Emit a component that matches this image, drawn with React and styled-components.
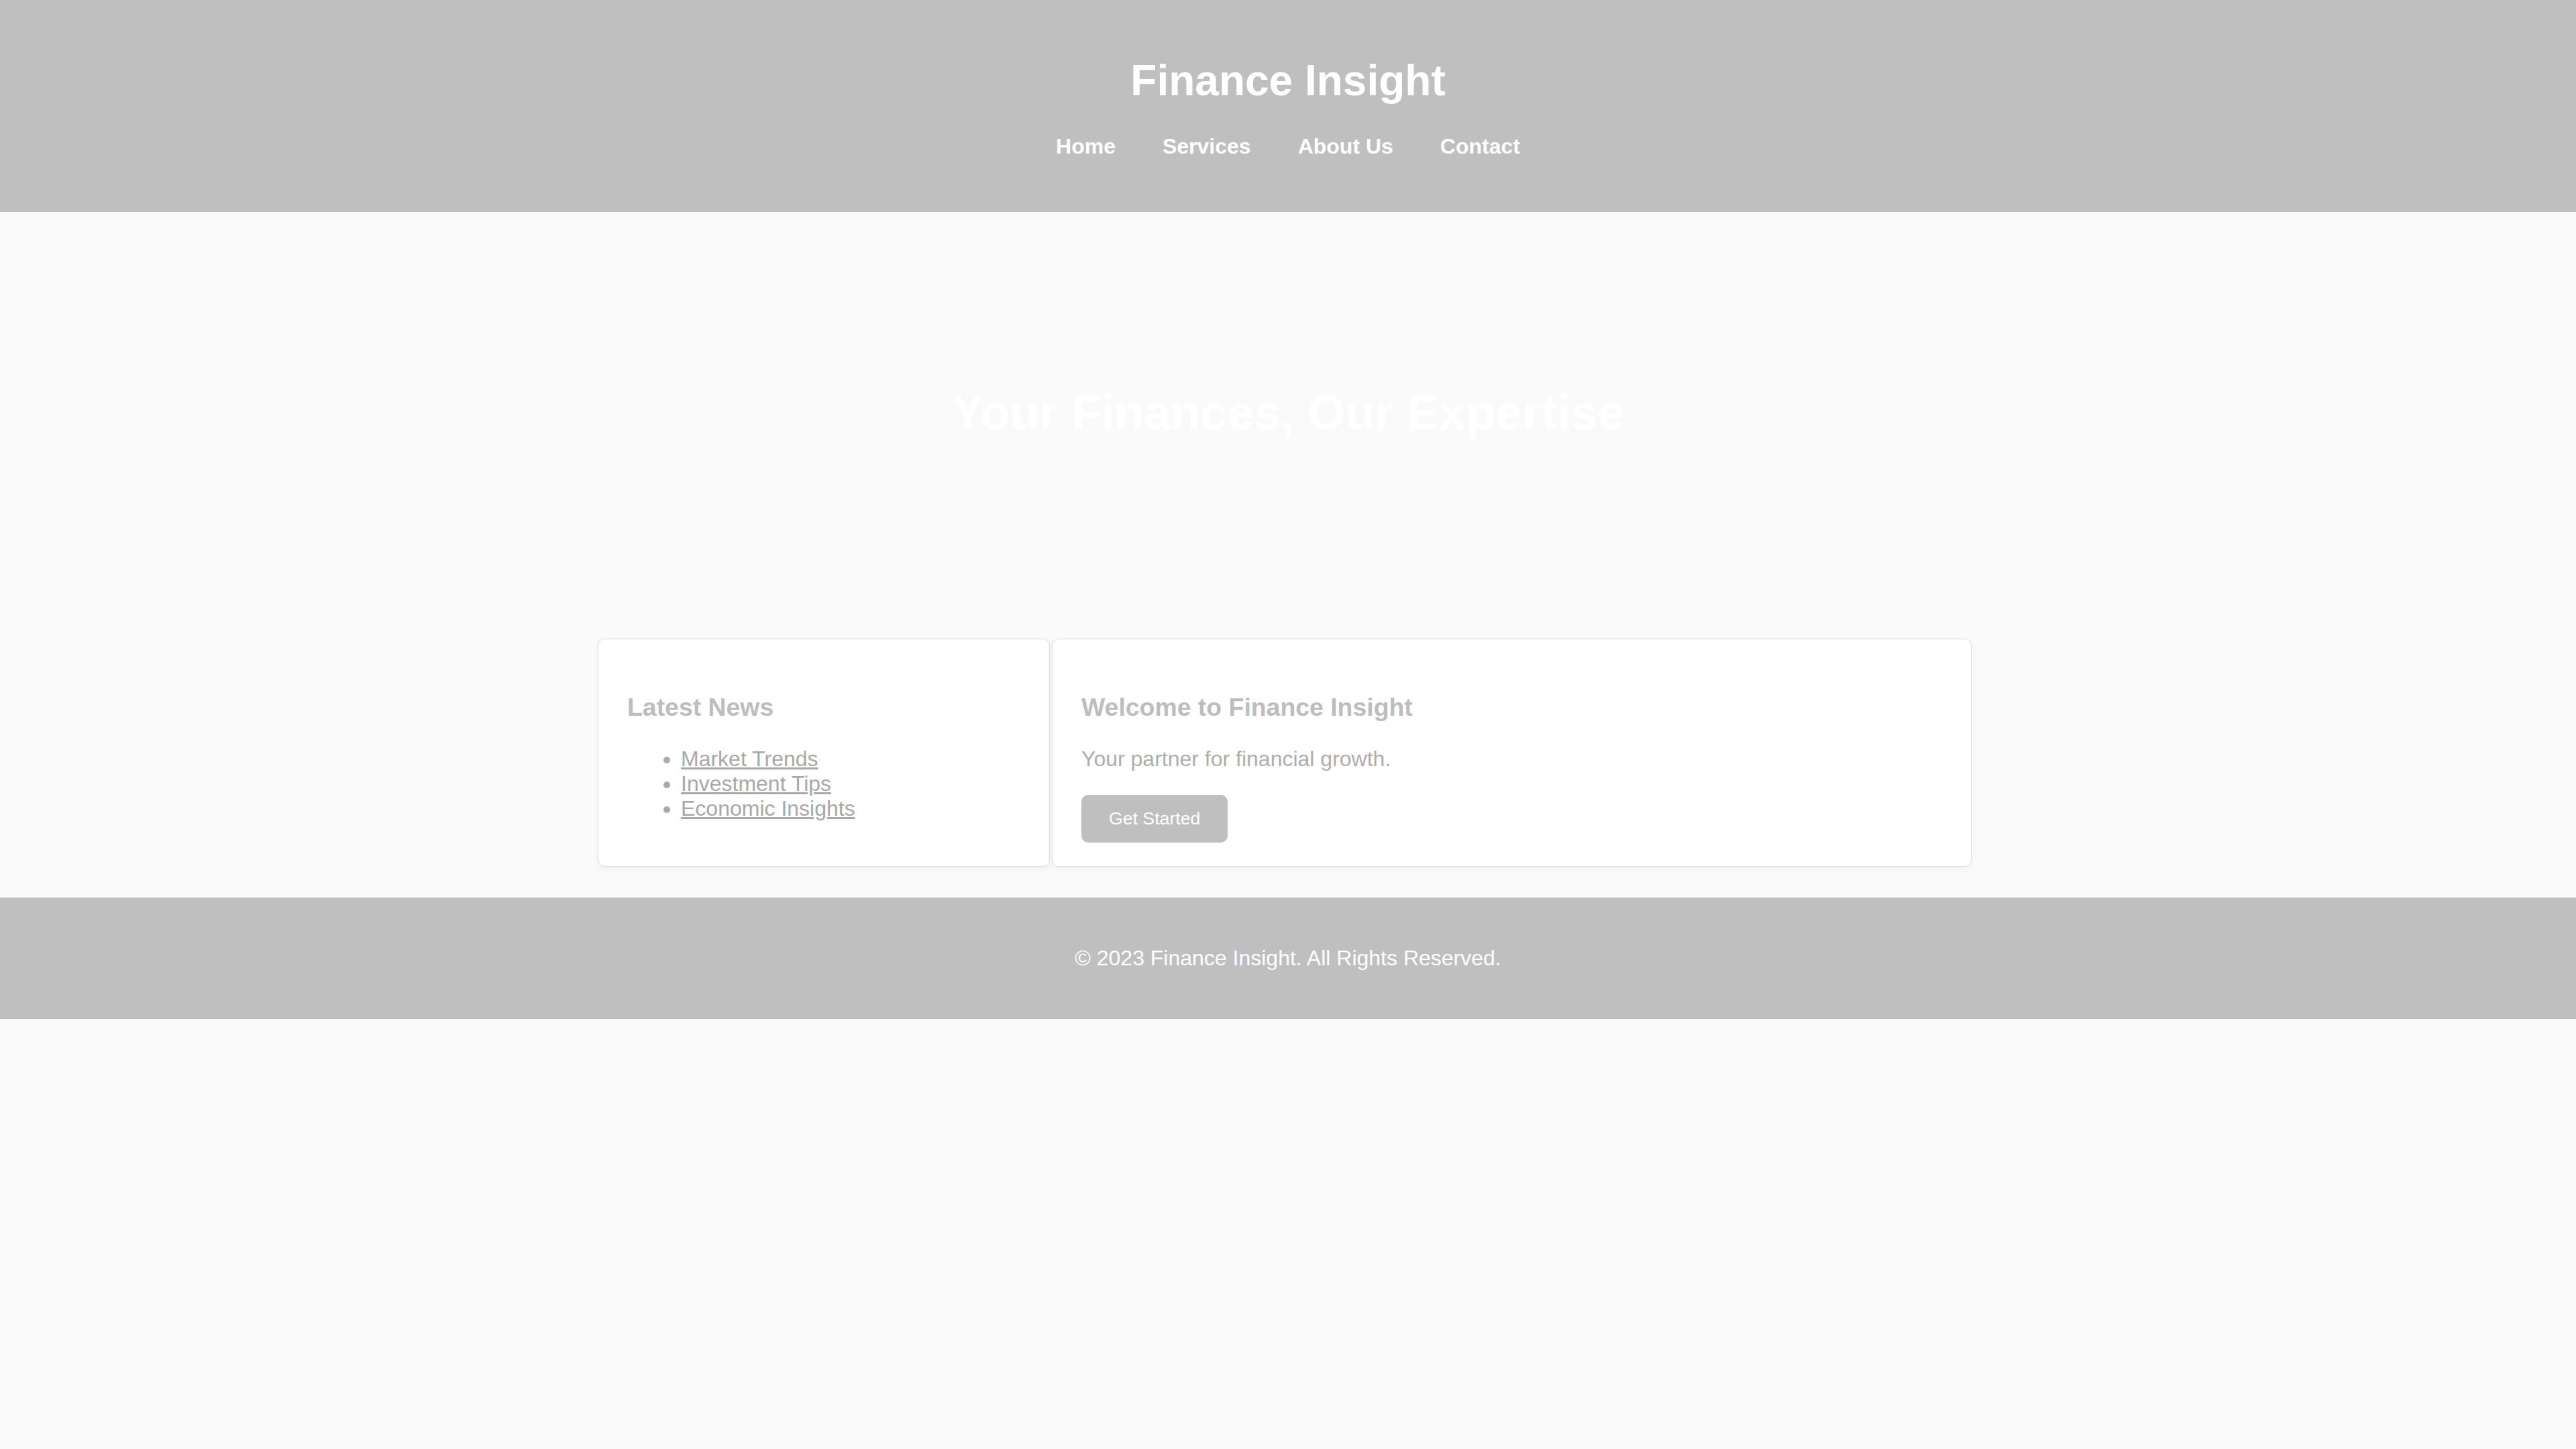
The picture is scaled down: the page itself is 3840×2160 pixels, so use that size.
import React from "react";
import styled, { createGlobalStyle } from "styled-components";

const GlobalStyle = createGlobalStyle`
    body {
        margin: 0;
        background: #fafafa;
        font-family: "Liberation Sans", Arial, sans-serif;
        font-size: 32px;
    }
`;

const Header = styled.header`
    background: #bfbfbf;
    color: #ffffff;
    text-align: center;
    padding: 40px 0 79px;
`;

const SiteTitle = styled.h1`
    font-size: 64px;
    margin: 43px 0;
    line-height: 74px;
`;

const Nav = styled.nav`
    display: flex;
    justify-content: center;
    gap: 70px;
`;

const NavLink = styled.a`
    color: #ffffff;
    font-weight: bold;
    text-decoration: none;
    line-height: 37px;
`;

const Hero = styled.section`
    height: 598px;
    display: flex;
    align-items: center;
    justify-content: center;
`;

const HeroTitle = styled.h2`
    color: #ffffff;
    font-size: 72px;
    margin: 0;
`;

const Main = styled.main`
    padding: 38px 10px 46px 0;
`;

const Columns = styled.div`
    display: grid;
    grid-template-columns: 674fr 1371fr;
    gap: 3px;
    max-width: 2048px;
    margin: 0 auto;
`;

const Card = styled.div`
    background: #ffffff;
    border: 1px solid #dcdcdc;
    border-radius: 10px;
    box-shadow: 0 4px 12px rgba(0, 0, 0, 0.04);
    padding: 43px 43px 35px;
`;

const CardTitle = styled.h3`
    color: #bdbdbd;
    font-size: 37.4px;
    line-height: 43px;
    margin: 37px 0;
`;

const NewsList = styled.ul`
    margin: 32px 0;
    padding-left: 80px;
    color: #aaaaaa;
    line-height: 37px;
`;

const NewsLink = styled.a`
    color: #a8a8a8;
    text-decoration: underline;
`;

const Lead = styled.p`
    color: #aeaeae;
    margin: 32px 0 35px;
    line-height: 37px;
`;

const Button = styled.button`
    background: #bfbfbf;
    color: #ffffff;
    border: none;
    border-radius: 10px;
    font-family: "Liberation Sans", Arial, sans-serif;
    font-size: 26.67px;
    padding: 20px 41px;
`;

const Footer = styled.footer`
    background: #bfbfbf;
    color: #ffffff;
    text-align: center;
    padding: 40px 0;
`;

const FooterText = styled.p`
    margin: 32px 0;
    line-height: 37px;
`;

const navItems = ["Home", "Services", "About Us", "Contact"];
const news = ["Market Trends", "Investment Tips", "Economic Insights"];

export default function App() {
    return (
        <React.Fragment>
            <GlobalStyle />
            <Header>
                <SiteTitle>Finance Insight</SiteTitle>
                <Nav>
                    {navItems.map((item) => (
                        <NavLink key={item} href="#">
                            {item}
                        </NavLink>
                    ))}
                </Nav>
            </Header>
            <Hero>
                <HeroTitle>Your Finances, Our Expertise</HeroTitle>
            </Hero>
            <Main>
                <Columns>
                    <Card>
                        <CardTitle>Latest News</CardTitle>
                        <NewsList>
                            {news.map((item) => (
                                <li key={item}>
                                    <NewsLink href="#">{item}</NewsLink>
                                </li>
                            ))}
                        </NewsList>
                    </Card>
                    <Card>
                        <CardTitle>Welcome to Finance Insight</CardTitle>
                        <Lead>Your partner for financial growth.</Lead>
                        <Button>Get Started</Button>
                    </Card>
                </Columns>
            </Main>
            <Footer>
                <FooterText>© 2023 Finance Insight. All Rights Reserved.</FooterText>
            </Footer>
        </React.Fragment>
    );
}
